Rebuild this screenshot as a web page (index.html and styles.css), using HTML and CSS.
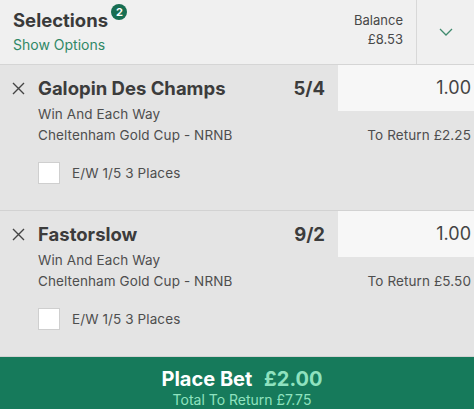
FILE: index.html
```html
<!DOCTYPE html>
<html lang="en">
<head>
    <meta charset="UTF-8">
    <meta name="viewport" content="width=device-width, initial-scale=1.0">
    <title>Bet Slip</title>
    <link rel="stylesheet" href="styles.css">
</head>
<body>
    <div class="slip">
        <div class="slip-header">
            <div class="header-main">
                <div class="title">Selections <span class="badge">2</span></div>
                <div class="show-options">Show Options</div>
            </div>
            <div class="balance">
                <div>Balance</div>
                <div>£8.53</div>
            </div>
            <div class="toggle">
                <svg width="14" height="8" viewBox="0 0 14 8"><path d="M1 1 L7 7 L13 1" fill="none" stroke="#3f8a6e" stroke-width="1.3"/></svg>
            </div>
        </div>

        <div class="selection">
            <div class="sel-head">
                <span class="remove">
                    <svg width="13" height="13" viewBox="0 0 13 13"><path d="M1 1 L12 12 M12 1 L1 12" stroke="#444" stroke-width="1.4"/></svg>
                </span>
                <span class="name">Galopin Des Champs</span>
                <span class="odds">5/4</span>
                <span class="stake">1.00</span>
            </div>
            <div class="market">Win And Each Way</div>
            <div class="event">
                <span>Cheltenham Gold Cup - NRNB</span>
                <span class="to-return">To Return £2.25</span>
            </div>
            <div class="ew">
                <span class="checkbox"></span>
                <span>E/W 1/5 3 Places</span>
            </div>
        </div>

        <div class="selection">
            <div class="sel-head">
                <span class="remove">
                    <svg width="13" height="13" viewBox="0 0 13 13"><path d="M1 1 L12 12 M12 1 L1 12" stroke="#444" stroke-width="1.4"/></svg>
                </span>
                <span class="name">Fastorslow</span>
                <span class="odds">9/2</span>
                <span class="stake">1.00</span>
            </div>
            <div class="market">Win And Each Way</div>
            <div class="event">
                <span>Cheltenham Gold Cup - NRNB</span>
                <span class="to-return">To Return £5.50</span>
            </div>
            <div class="ew">
                <span class="checkbox"></span>
                <span>E/W 1/5 3 Places</span>
            </div>
        </div>

        <div class="place-bet">
            <div class="place-line">Place Bet <span class="amount">£2.00</span></div>
            <div class="total">Total To Return £7.75</div>
        </div>
    </div>
</body>
</html>
```

FILE: styles.css
```css
body {
    margin: 0;
    font-family: Inter, "Noto Sans", sans-serif;
    color: #3d3d3d;
    background: #e4e4e4;
}
.slip {
    width: 474px;
    height: 409px;
    overflow: hidden;
}
.slip-header {
    display: flex;
    height: 64px;
    background: #f0f0f0;
    border-bottom: 1px solid #d5d5d5;
}
.header-main {
    flex: 1;
    padding: 5px 13px 0;
}
.title {
    font-size: 18.5px;
    font-weight: 700;
    line-height: 30px;
    color: #3a3a3a;
}
.badge {
    display: inline-block;
    position: relative;
    top: -10px;
    width: 16px;
    height: 16px;
    margin-left: -1px;
    border-radius: 50%;
    background: #176e52;
    color: #fff;
    font-size: 11px;
    line-height: 16px;
    text-align: center;
    vertical-align: middle;
}
.show-options {
    font-size: 14px;
    line-height: 18px;
    margin-top: 1px;
    color: #2f8866;
}
.balance {
    padding: 11px 13px 0 0;
    text-align: right;
    font-size: 13px;
    line-height: 19px;
    color: #484848;
}
.toggle {
    width: 57px;
    border-left: 1px solid #d8d8d8;
    display: flex;
    align-items: center;
    justify-content: center;
}
.selection {
    background: #e4e4e4;
    border-bottom: 1px solid #d2d2d2;
    font-size: 13.5px;
    letter-spacing: 0.1px;
    color: #4e4e4e;
}
.selection:last-of-type {
    border-bottom: none;
}
.sel-head {
    display: flex;
    align-items: center;
    height: 46px;
    letter-spacing: 0;
}
.remove {
    width: 38px;
    display: flex;
    justify-content: center;
    padding-right: 1px;
    box-sizing: border-box;
}
.name {
    flex: 1;
    font-size: 18.5px;
    font-weight: 700;
    color: #3c3c3c;
}
.odds {
    font-size: 18.5px;
    font-weight: 700;
    color: #3c3c3c;
    padding-right: 13px;
}
.stake {
    width: 136px;
    height: 46px;
    line-height: 46px;
    background: #f7f7f7;
    text-align: right;
    padding-right: 3px;
    box-sizing: border-box;
    font-size: 18px;
    color: #444;
}
.market {
    margin-top: -7px;
    padding-left: 38px;
    line-height: 21px;
}
.event {
    display: flex;
    justify-content: space-between;
    padding: 0 3px 0 38px;
    line-height: 21px;
}
.ew {
    display: flex;
    align-items: center;
    gap: 12px;
    padding-left: 38px;
    margin: 16px 0 26px;
    height: 22px;
}
.selection:last-of-type .ew {
    margin-bottom: 25px;
}
.checkbox {
    width: 22px;
    height: 22px;
    box-sizing: border-box;
    background: #fff;
    border: 1px solid #cfcfcf;
}
.place-bet {
    height: 54px;
    background: #167a5b;
    text-align: center;
    padding: 10px 0 0 10px;
    box-sizing: border-box;
}
.place-line {
    font-size: 20px;
    font-weight: 700;
    color: #fff;
    line-height: 24px;
}
.amount {
    color: #8fe2bf;
    margin-left: 7px;
}
.total {
    font-size: 14px;
    color: #8fe2bf;
    line-height: 18px;
}
```
